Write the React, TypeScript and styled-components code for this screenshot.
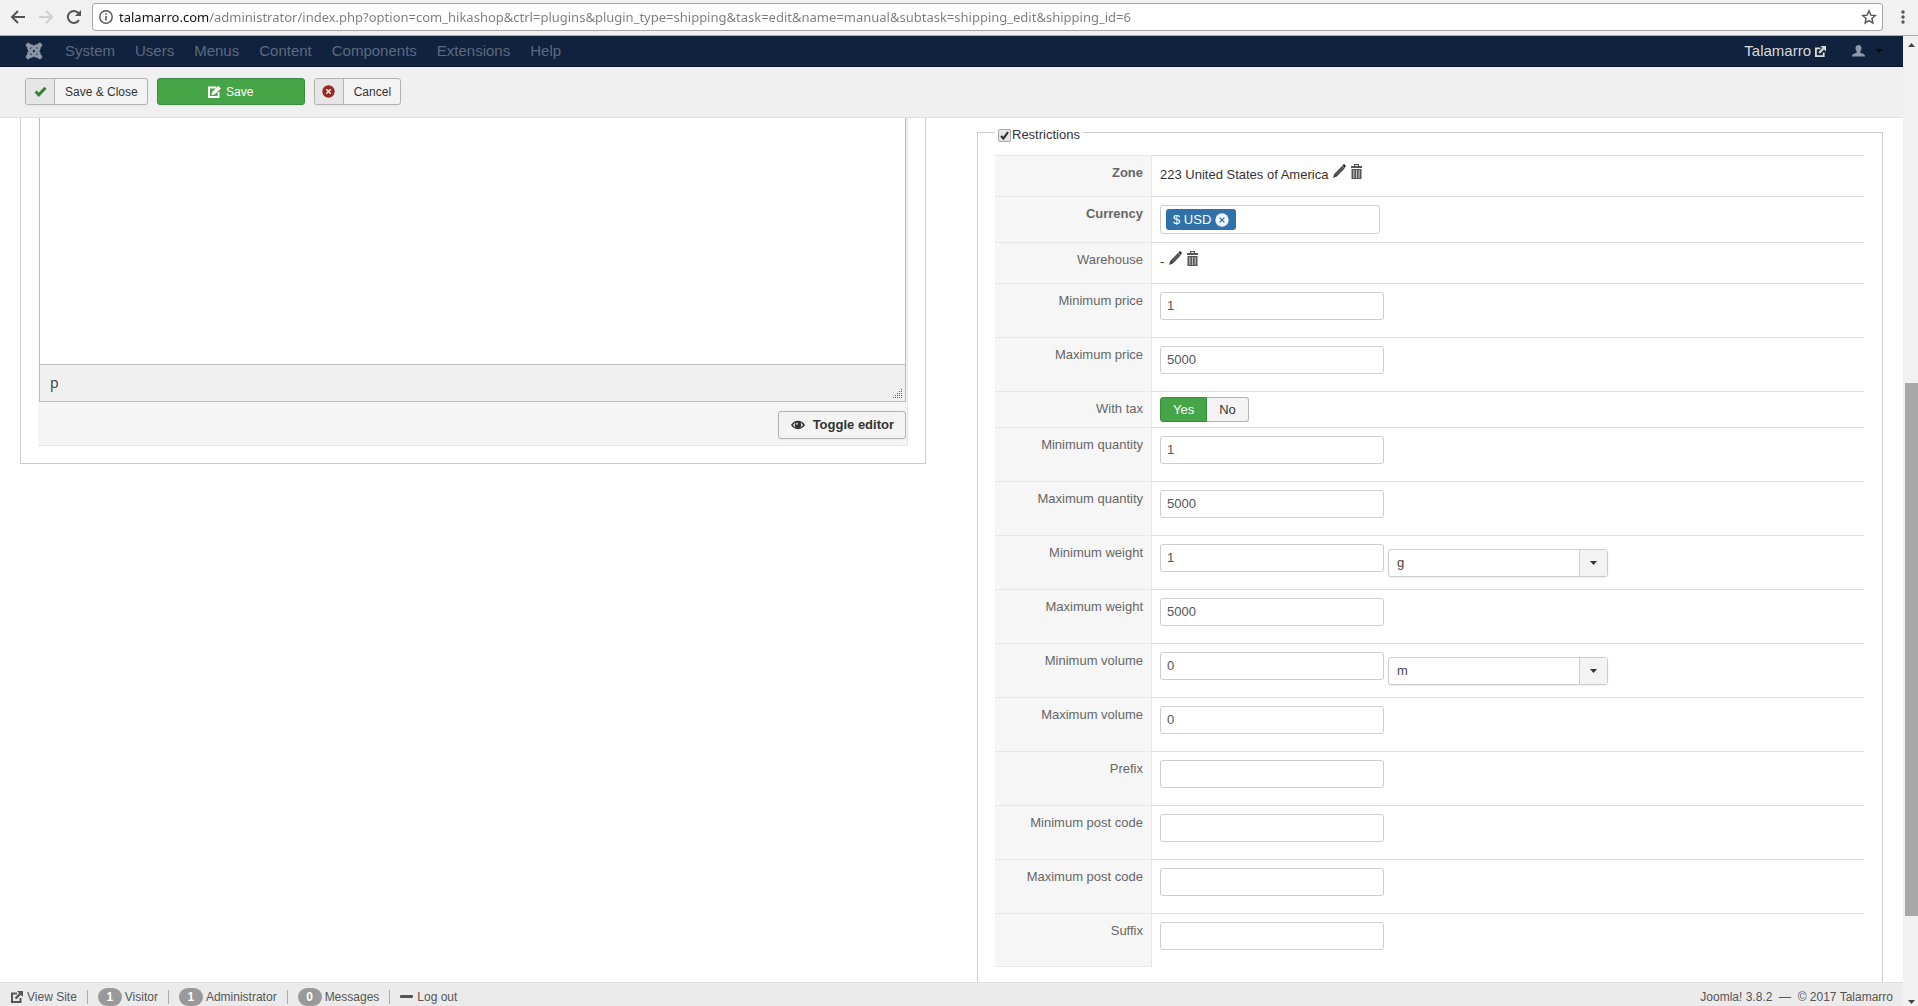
import React, { useId, useState } from "react";
import styled, { createGlobalStyle, css } from "styled-components";
import { FaJoomla } from "react-icons/fa";

const GlobalStyle = createGlobalStyle`
  *, *::before, *::after { box-sizing: border-box; }
  body {
    margin: 0;
    background: #fff;
    color: #333;
    font-family: "Liberation Sans", Arial, Helvetica, sans-serif;
    font-size: 13px;
    line-height: 18px;
  }
  button, input, select { font: inherit; margin: 0; }
  button { cursor: pointer; }
  a { color: inherit; text-decoration: none; }
`;

const Window = styled.div`
  display: flex;
  flex-direction: column;
  height: 100vh;
  overflow: hidden;
`;

/* ---------- Browser bar ---------- */

const BrowserBar = styled.header`
  display: flex;
  align-items: center;
  flex: none;
  height: 36px;
  padding: 0 7px 2px 10px;
  background: #f1f1f1;
  border-bottom: 1px solid #a9a9ab;
`;

const BrowserButton = styled.button`
  display: flex;
  align-items: center;
  justify-content: center;
  width: 16px;
  height: 16px;
  padding: 0;
  border: 0;
  background: none;
  color: #555;
  &:disabled { color: #cfcfcf; }
`;

const HistoryButtons = styled.nav`
  display: flex;
  gap: 12px;
  margin-right: 10px;
`;

const AddressBox = styled.div`
  display: flex;
  flex: 1;
  align-items: center;
  gap: 6px;
  height: 28px;
  padding: 0 5px 0 6px;
  border: 1px solid #a6a6a6;
  border-radius: 3px;
  background: #fff;
`;

const AddressInput = styled.input`
  flex: 1;
  min-width: 0;
  height: 20px;
  padding: 0;
  border: 0;
  outline: 0;
  font-family: "Noto Sans", "Open Sans", sans-serif;
  font-size: 13px;
  line-height: 20px;
  color: #777;
  background: linear-gradient(to right, #111 90px, #7b7b7b 90px);
  background-clip: text;
  -webkit-background-clip: text;
  -webkit-text-fill-color: transparent;
`;

const MenuSlot = styled.div`
  margin-left: 12px;
`;

/* ---------- Page frame ---------- */

const Viewport = styled.div`
  display: flex;
  flex: 1;
  min-height: 0;
`;

const Page = styled.div`
  display: flex;
  flex-direction: column;
  flex: 1;
  min-width: 0;
`;

const ScrollTrack = styled.div`
  display: flex;
  flex-direction: column;
  flex: none;
  width: 15px;
  padding-left: 2px;
  background: #f1f1f1;
`;

const ScrollArrow = styled.button<{ $down?: boolean }>`
  display: flex;
  flex: none;
  align-items: ${(p) => (p.$down ? "flex-end" : "center")};
  justify-content: center;
  height: 17px;
  padding: ${(p) => (p.$down ? "0 0 2px" : "0")};
  border: 0;
  background: none;
  color: #444;
`;

const ScrollSpace = styled.div<{ $share: number }>`
  flex: ${(p) => p.$share} 1 0;
`;

const ScrollThumb = styled(ScrollSpace)`
  background: #a8a8a8;
`;

/* ---------- Admin navigation ---------- */

const NavBar = styled.nav`
  display: flex;
  align-items: center;
  flex: none;
  height: 31px;
  padding: 0 20px 0 25px;
  background: #10223e;
  border-bottom: 1px solid #0d1226;
  color: #8d97a8;
  font-size: 15px;
  line-height: 20px;
`;

const Logo = styled(FaJoomla)`
  width: 18px;
  height: 18px;
  stroke: currentColor;
  stroke-width: 24px;
  overflow: visible;
`;

const NavList = styled.ul`
  display: flex;
  flex: 1;
  gap: 20px;
  margin: 0 0 0 22px;
  padding: 0;
  list-style: none;
`;

const NavLink = styled.a`
  color: #5c6a80;
`;

const SiteLink = styled.a`
  display: flex;
  align-items: center;
  gap: 4px;
  margin-right: 26px;
  color: #d9d9d9;
`;

const UserButton = styled.button`
  display: flex;
  align-items: center;
  gap: 10px;
  padding: 0;
  border: 0;
  background: none;
  color: #8d97a8;
`;

/* ---------- Toolbar ---------- */

const ToolBar = styled.div`
  display: flex;
  align-items: flex-start;
  flex: none;
  gap: 9px;
  height: 51px;
  padding: 11px 25px;
  background: #f0f0f0;
  border-bottom: 1px solid #dedede;
`;

const buttonFrame = css`
  border: 1px solid #b3b3b3;
  border-radius: 3px;
  background: #f3f3f3;
  box-shadow: 0 1px 2px rgba(0, 0, 0, 0.05);
  color: #333;
`;

const ToolButton = styled.button`
  ${buttonFrame}
  display: flex;
  align-items: stretch;
  height: 27px;
  padding: 0;
  font-size: 12px;
  line-height: 26px;
`;

const ToolIcon = styled.span`
  display: flex;
  align-items: center;
  justify-content: center;
  width: 29px;
  border-right: 1px solid #b3b3b3;
  border-radius: 3px 0 0 3px;
  background: #e6e6e6;
`;

const ToolText = styled.span`
  padding: 0 9px 0 10px;
`;

const SaveButton = styled(ToolButton)`
  align-items: center;
  justify-content: center;
  gap: 5px;
  width: 148px;
  border-color: #3d8b40;
  background: #46a546;
  color: #fff;
`;

/* ---------- Content ---------- */

const Content = styled.main`
  display: grid;
  grid-template-columns: minmax(0, 1fr) minmax(0, 1fr);
  align-items: start;
  flex: 1;
  gap: 51px;
  min-height: 0;
  padding: 0 20px;
  overflow: hidden;
`;

const EditorPanel = styled.section`
  padding: 0 17px 17px;
  border: 1px solid #ccc;
  border-top: 0;
`;

const EditorCell = styled.div`
  padding: 0 1px 6px;
  border: 1px solid #e6e6e6;
  border-width: 0 1px 1px 0;
  background: #f5f5f5;
`;

const Editor = styled.div`
  border: 1px solid #bbb;
  border-top: 0;
`;

const EditorBody = styled.div`
  height: 246px;
  background: #fff;
`;

const EditorStatus = styled.div`
  display: flex;
  align-items: center;
  justify-content: space-between;
  height: 37px;
  padding: 0 2px 0 10px;
  border-top: 1px solid #bbb;
  background: #f0f0f0;
  font-family: "Open Sans", "Noto Sans", sans-serif;
  font-size: 14px;
`;

const ResizeHandle = styled.span`
  display: flex;
  align-self: flex-end;
  padding-bottom: 2px;
`;

const EditorActions = styled.div`
  display: flex;
  justify-content: flex-end;
  padding-top: 9px;
`;

const ToggleButton = styled.button`
  ${buttonFrame}
  display: flex;
  align-items: center;
  gap: 8px;
  height: 28px;
  padding: 0 11px 0 12px;
  font-weight: 700;
`;

const Restrictions = styled.fieldset`
  min-width: 0;
  margin: 2px 0 0;
  padding: 11px 18px 40px 17px;
  border: 1px solid #ccc;
`;

const Legend = styled.legend`
  padding: 6px 3px 0;
`;

const CheckLabel = styled.label`
  display: flex;
  align-items: center;
  gap: 1px;
`;

const CheckBox = styled.input`
  appearance: none;
  width: 13px;
  height: 13px;
  border: 1px solid #a9a9a9;
  border-radius: 2px;
  background: #e6e6e6;
  &:checked {
    background: #e6e6e6 url("data:image/svg+xml,%3Csvg xmlns='http://www.w3.org/2000/svg' viewBox='0 0 11 11'%3E%3Cpath d='M2 6l2.4 2.6L9 2.2' fill='none' stroke='%23333' stroke-width='2.2'/%3E%3C/svg%3E") center / 11px 11px no-repeat;
  }
`;

const FormTable = styled.table`
  width: 100%;
  border-spacing: 0;
`;

const KeyCell = styled.th<{ $bold?: boolean }>`
  width: 157px;
  padding: 8px;
  border: 1px solid #e8e8e8;
  border-width: 1px 1px 0 0;
  background: #f6f6f6;
  color: #666;
  font-weight: ${(p) => (p.$bold ? 700 : 400)};
  text-align: right;
  vertical-align: top;
  tr:last-child > & { border-bottom-width: 1px; }
`;

const ValueCell = styled.td<{ $tight?: boolean }>`
  padding: ${(p) => (p.$tight ? "5px" : "8px")} 8px;
  border-top: 1px solid #ddd;
  vertical-align: top;
`;

const Pick = styled.div`
  display: flex;
  align-items: flex-start;
  gap: 5px;
  height: 24px;
  line-height: 22px;
`;

const IconButton = styled.button`
  display: flex;
  padding: 0;
  border: 0;
  background: none;
`;

const FieldLine = styled.div`
  display: flex;
  gap: 4px;
  height: 37px;
`;

const TextInput = styled.input`
  width: 224px;
  height: 28px;
  padding: 3px 6px 5px;
  border: 1px solid #ccc;
  border-radius: 3px;
  background: #fff;
  color: #555;
`;

const SelectBox = styled.div`
  position: relative;
  width: 220px;
  height: 28px;
  margin-top: 5px;
`;

const Select = styled.select`
  appearance: none;
  width: 100%;
  height: 100%;
  padding: 0 36px 0 8px;
  border: 1px solid #ccc;
  border-radius: 3px;
  background: #fff;
  box-shadow: 0 1px 2px rgba(0, 0, 0, 0.08);
  color: #444;
`;

const SelectArrow = styled.span`
  position: absolute;
  top: 1px;
  right: 1px;
  bottom: 1px;
  display: flex;
  align-items: center;
  justify-content: center;
  width: 28px;
  border-left: 1px solid #ccc;
  background: #f3f3f3;
  color: #333;
  pointer-events: none;
`;

const TagBox = styled.div`
  display: flex;
  align-items: center;
  gap: 4px;
  width: 220px;
  height: 29px;
  padding: 0 5px;
  border: 1px solid #ccc;
  border-radius: 3px;
`;

const Tag = styled.span`
  display: flex;
  align-items: center;
  gap: 4px;
  height: 21px;
  padding: 0 7px;
  border-radius: 3px;
  background: #3071a9;
  color: #fff;
`;

const TagInput = styled.input`
  flex: 1;
  min-width: 0;
  border: 0;
  outline: 0;
`;

const Toggle = styled.div`
  display: flex;
  height: 25px;
`;

const HiddenRadio = styled.input`
  position: absolute;
  opacity: 0;
`;

const ToggleOption = styled.label<{ $on: boolean; $first?: boolean }>`
  position: relative;
  padding: 0 12px;
  border: 1px solid ${(p) => (p.$on ? "#3d8b40" : "#b3b3b3")};
  border-left-width: ${(p) => (p.$first ? "1px" : "0")};
  border-radius: ${(p) => (p.$first ? "3px 0 0 3px" : "0 3px 3px 0")};
  background: ${(p) => (p.$on ? "#46a546" : "#f3f3f3")};
  color: ${(p) => (p.$on ? "#fff" : "#333")};
  line-height: 23px;
`;

/* ---------- Footer ---------- */

const Footer = styled.footer`
  display: flex;
  align-items: center;
  justify-content: space-between;
  flex: none;
  height: 24px;
  padding: 4px 10px 0 11px;
  border-top: 1px solid #dcdcdc;
  background: #ebebeb;
  color: #555;
  font-size: 12px;
`;

const StatusList = styled.ul`
  display: flex;
  align-items: center;
  margin: 0;
  padding: 0;
  list-style: none;
`;

const StatusItem = styled.li<{ $gap?: number }>`
  display: flex;
  align-items: center;
  gap: ${(p) => p.$gap ?? 3}px;
  &:not(:first-child) {
    margin-left: 10px;
  }
  &:not(:first-child)::before {
    content: "";
    width: 1px;
    height: 14px;
    margin-right: 7px;
    background: #aaa;
  }
`;

const Badge = styled.span`
  min-width: 24px;
  border-radius: 9px;
  background: #999;
  color: #fff;
  font-weight: 700;
  text-align: center;
`;

/* ---------- Drawings ---------- */

const BackIcon = ({ flip }: { flip?: boolean }) => (
  <svg width="16" height="16" viewBox="0 0 16 16" fill="none" stroke="currentColor" strokeWidth="2">
    <path d={flip ? "M1 8h13M8 2l6 6-6 6" : "M15 8H2M8 2L2 8l6 6"} />
  </svg>
);

const ReloadIcon = () => (
  <svg width="16" height="16" viewBox="0 0 16 16">
    <path d="M13 11a6 6 0 1 1-.6-7" fill="none" stroke="currentColor" strokeWidth="2" />
    <path d="M15 1v6H9z" fill="currentColor" />
  </svg>
);

const InfoIcon = () => (
  <svg width="14" height="14" viewBox="0 0 14 14">
    <circle cx="7" cy="7" r="6.2" fill="none" stroke="#555" strokeWidth="1.4" />
    <path d="M6.2 6h1.6v4.6H6.2zM6.2 3.2h1.6v1.6H6.2z" fill="#555" />
  </svg>
);

const StarIcon = () => (
  <svg width="16" height="16" viewBox="0 0 16 16">
    <path d="M8 1.8l1.8 4.3 4.6.4-3.5 3 1 4.5L8 11.6 4.1 14l1-4.5-3.5-3 4.6-.4z" fill="none" stroke="#555" strokeWidth="1.4" />
  </svg>
);

const DotsIcon = () => (
  <svg width="4" height="14" viewBox="0 0 4 14" fill="#555">
    <circle cx="2" cy="2" r="1.7" />
    <circle cx="2" cy="7" r="1.7" />
    <circle cx="2" cy="12" r="1.7" />
  </svg>
);

const Caret = ({ up, size = 7 }: { up?: boolean; size?: number }) => (
  <svg width={size} height="4" viewBox="0 0 8 4" preserveAspectRatio="none" fill="currentColor">
    <path d={up ? "M0 4h8L4 0z" : "M0 0h8L4 4z"} />
  </svg>
);

const OutIcon = ({ size = 12 }: { size?: number }) => (
  <svg width={size} height={size} viewBox="0 0 12 12" fill="none" stroke="currentColor">
    <path d="M6 2.5H1v8.500h8.500V7" strokeWidth="2" />
    <path d="M4.500 7.500L9.500 2.500" strokeWidth="2.400" />
    <path d="M6 0h6v6z" fill="currentColor" stroke="none" />
  </svg>
);

const UserIcon = () => (
  <svg width="13" height="12" viewBox="0 0 13 12" fill="currentColor">
    <path d="M6.500 0C8.500 0 9.500 1.300 9.500 3.200c0 1.500-.6 2.600-1.400 3.400v1L12 9.200c.7.300 1 .9 1 1.800v.6H0V11c0-.9.300-1.500 1-1.800l3.900-1.600v-1C4.100 5.800 3.500 4.700 3.500 3.200 3.500 1.300 4.500 0 6.500 0z" />
  </svg>
);

const CheckIcon = () => (
  <svg width="13" height="11" viewBox="0 0 13 11">
    <path d="M1.500 5.500l3.300 3.300L11.500 1.800" fill="none" stroke="#378137" strokeWidth="3" />
  </svg>
);

const EditIcon = () => (
  <svg width="13" height="12" viewBox="0 0 13 12">
    <path d="M8.500 1.500H1v9.500h9.500V6" fill="none" stroke="#fff" strokeWidth="2" />
    <path d="M3.500 9l.5-3L10.300 0l2.700 2.500L6.500 8.600z" fill="#fff" />
  </svg>
);

const CancelIcon = () => (
  <svg width="13" height="13" viewBox="0 0 13 13">
    <circle cx="6.500" cy="6.500" r="6.200" fill="#942a25" />
    <path d="M4.300 4.300l4.400 4.400M8.700 4.300L4.300 8.700" stroke="#f3e6e6" strokeWidth="1.600" />
  </svg>
);

const EyeIcon = () => (
  <svg width="14" height="10" viewBox="0 0 14 10">
    <path d="M0 5C3-.8 11-.8 14 5 11 10.500 3 10.500 0 5z" fill="#333" />
    <path d="M2 5c.6-1.200 1.300-2 2.400-2.600C3.800 4 3.800 6 4.400 7.500 3.300 7 2.600 6.200 2 5zM12 5c-.6-1.200-1.300-2-2.400-2.600.6 1.600.6 3.600 0 5.100C10.700 7 11.400 6.200 12 5z" fill="#ddd" />
    <circle cx="6" cy="3.800" r="1" fill="#ddd" />
  </svg>
);

const GripIcon = () => (
  <svg width="10" height="10" viewBox="0 0 10 10" fill="#80506f">
    {[0, 1, 2, 3, 4].flatMap((row) =>
      Array.from({ length: row + 1 }, (_, i) => (
        <rect key={`${row}-${i}`} x={8 - i * 2} y={row * 2} width="1" height="1" />
      ))
    )}
  </svg>
);

const PencilIcon = () => (
  <svg width="13" height="14" viewBox="0 0 13 14">
    <path d="M0 14l1.200-4L9 2l2.600 2.600-7.800 8z" fill="#444" />
    <path d="M9.400 1.600L11 0l2 2-1.500 2z" fill="#222" />
    <path d="M3 10.500L9.500 4" stroke="#777" strokeWidth="1" />
  </svg>
);

const TrashIcon = () => (
  <svg width="11" height="15" viewBox="0 0 11 15">
    <path d="M3 2V0h5v2h3v2H0V2zM4.200 2h2.600V1H4.200z" fill="#555" />
    <path d="M.5 5h10v10h-10z" fill="#555" />
    <path d="M2.800 6v8M5.500 6v8M8.200 6v8" stroke="#bbb" strokeWidth="1.200" />
  </svg>
);

const TagCloseIcon = () => (
  <svg width="14" height="14" viewBox="0 0 14 14">
    <circle cx="7" cy="7" r="6.700" fill="#eef4f9" />
    <path d="M4.600 4.600l4.800 4.800M9.400 4.600L4.600 9.400" stroke="#3071a9" strokeWidth="1.300" />
  </svg>
);

const DashIcon = () => (
  <svg width="14" height="3" viewBox="0 0 14 3">
    <rect width="13" height="3" rx="1" fill="#555" />
  </svg>
);

/* ---------- Form rows ---------- */

const Field = ({ label, value, units }: { label: string; value?: string; units?: string[] }) => {
  const id = useId();
  return (
    <tr>
      <KeyCell scope="row">
        <label htmlFor={id}>{label}</label>
      </KeyCell>
      <ValueCell>
        <FieldLine>
          <TextInput id={id} type="text" defaultValue={value} />
          {units && (
            <SelectBox>
              <Select aria-label={`${label} unit`} defaultValue={units[0]}>
                {units.map((unit) => (
                  <option key={unit}>{unit}</option>
                ))}
              </Select>
              <SelectArrow>
                <Caret />
              </SelectArrow>
            </SelectBox>
          )}
        </FieldLine>
      </ValueCell>
    </tr>
  );
};

const PickRow = ({ label, value, bold }: { label: string; value: string; bold?: boolean }) => (
  <tr>
    <KeyCell scope="row" $bold={bold}>{label}</KeyCell>
    <ValueCell>
      <Pick>
        {value}
        <IconButton type="button" aria-label={`Edit ${label}`}><PencilIcon /></IconButton>
        <IconButton type="button" aria-label={`Delete ${label}`}><TrashIcon /></IconButton>
      </Pick>
    </ValueCell>
  </tr>
);

const menus = ["System", "Users", "Menus", "Content", "Components", "Extensions", "Help"];

const url =
  "talamarro.com/administrator/index.php?option=com_hikashop&ctrl=plugins&plugin_type=shipping&task=edit&name=manual&subtask=shipping_edit&shipping_id=6";

export default function App() {
  const [taxed, setTaxed] = useState(true);

  return (
    <Window>
      <GlobalStyle />
      <BrowserBar>
        <HistoryButtons aria-label="History">
          <BrowserButton aria-label="Back"><BackIcon /></BrowserButton>
          <BrowserButton aria-label="Forward" disabled><BackIcon flip /></BrowserButton>
          <BrowserButton aria-label="Reload"><ReloadIcon /></BrowserButton>
        </HistoryButtons>
        <AddressBox>
          <InfoIcon />
          <AddressInput aria-label="Address" defaultValue={url} spellCheck={false} />
          <BrowserButton aria-label="Bookmark"><StarIcon /></BrowserButton>
        </AddressBox>
        <MenuSlot>
          <BrowserButton aria-label="Menu"><DotsIcon /></BrowserButton>
        </MenuSlot>
      </BrowserBar>

      <Viewport>
        <Page>
          <NavBar>
            <Logo />
            <NavList>
              {menus.map((menu) => (
                <li key={menu}><NavLink href="#">{menu}</NavLink></li>
              ))}
            </NavList>
            <SiteLink href="#">Talamarro <OutIcon size={11} /></SiteLink>
            <UserButton aria-label="User menu">
              <UserIcon />
              <svg width="8" height="4" viewBox="0 0 8 4"><path d="M0 0h8L4 4z" fill="#060c18" /></svg>
            </UserButton>
          </NavBar>

          <ToolBar>
            <ToolButton type="button">
              <ToolIcon><CheckIcon /></ToolIcon>
              <ToolText>Save &amp; Close</ToolText>
            </ToolButton>
            <SaveButton type="button"><EditIcon />Save</SaveButton>
            <ToolButton type="button">
              <ToolIcon><CancelIcon /></ToolIcon>
              <ToolText>Cancel</ToolText>
            </ToolButton>
          </ToolBar>

          <Content>
            <EditorPanel>
              <EditorCell>
                <Editor>
                  <EditorBody />
                  <EditorStatus>
                    p
                    <ResizeHandle><GripIcon /></ResizeHandle>
                  </EditorStatus>
                </Editor>
                <EditorActions>
                  <ToggleButton type="button"><EyeIcon />Toggle editor</ToggleButton>
                </EditorActions>
              </EditorCell>
            </EditorPanel>

            <Restrictions>
              <Legend>
                <CheckLabel>
                  <CheckBox type="checkbox" defaultChecked />
                  Restrictions
                </CheckLabel>
              </Legend>
              <FormTable>
                <tbody>
                  <PickRow label="Zone" value="223 United States of America" bold />
                  <tr>
                    <KeyCell scope="row" $bold><label htmlFor="currency">Currency</label></KeyCell>
                    <ValueCell>
                      <TagBox>
                        <Tag>
                          $ USD
                          <IconButton type="button" aria-label="Remove $ USD"><TagCloseIcon /></IconButton>
                        </Tag>
                        <TagInput id="currency" type="text" />
                      </TagBox>
                    </ValueCell>
                  </tr>
                  <PickRow label="Warehouse" value="-" />
                  <Field label="Minimum price" value="1" />
                  <Field label="Maximum price" value="5000" />
                  <tr>
                    <KeyCell scope="row">With tax</KeyCell>
                    <ValueCell $tight>
                      <Toggle role="radiogroup" aria-label="With tax">
                        <ToggleOption $on={taxed} $first>
                          <HiddenRadio type="radio" name="tax" checked={taxed} onChange={() => setTaxed(true)} />
                          Yes
                        </ToggleOption>
                        <ToggleOption $on={!taxed}>
                          <HiddenRadio type="radio" name="tax" checked={!taxed} onChange={() => setTaxed(false)} />
                          No
                        </ToggleOption>
                      </Toggle>
                    </ValueCell>
                  </tr>
                  <Field label="Minimum quantity" value="1" />
                  <Field label="Maximum quantity" value="5000" />
                  <Field label="Minimum weight" value="1" units={["g", "kg"]} />
                  <Field label="Maximum weight" value="5000" />
                  <Field label="Minimum volume" value="0" units={["m", "cm"]} />
                  <Field label="Maximum volume" value="0" />
                  <Field label="Prefix" />
                  <Field label="Minimum post code" />
                  <Field label="Maximum post code" />
                  <Field label="Suffix" />
                </tbody>
              </FormTable>
            </Restrictions>
          </Content>

          <Footer>
            <StatusList>
              <StatusItem $gap={4}><OutIcon /><a href="#">View Site</a></StatusItem>
              <StatusItem><Badge>1</Badge>Visitor</StatusItem>
              <StatusItem><Badge>1</Badge>Administrator</StatusItem>
              <StatusItem><Badge>0</Badge><a href="#">Messages</a></StatusItem>
              <StatusItem><DashIcon /><a href="#">Log out</a></StatusItem>
            </StatusList>
            <span>Joomla! 3.8.2 &nbsp;—&nbsp; © 2017 Talamarro</span>
          </Footer>
        </Page>

        <ScrollTrack>
          <ScrollArrow aria-label="Scroll up"><Caret up /></ScrollArrow>
          <ScrollSpace $share={330} />
          <ScrollThumb $share={533} />
          <ScrollSpace $share={73} />
          <ScrollArrow aria-label="Scroll down" $down><Caret /></ScrollArrow>
        </ScrollTrack>
      </Viewport>
    </Window>
  );
}
